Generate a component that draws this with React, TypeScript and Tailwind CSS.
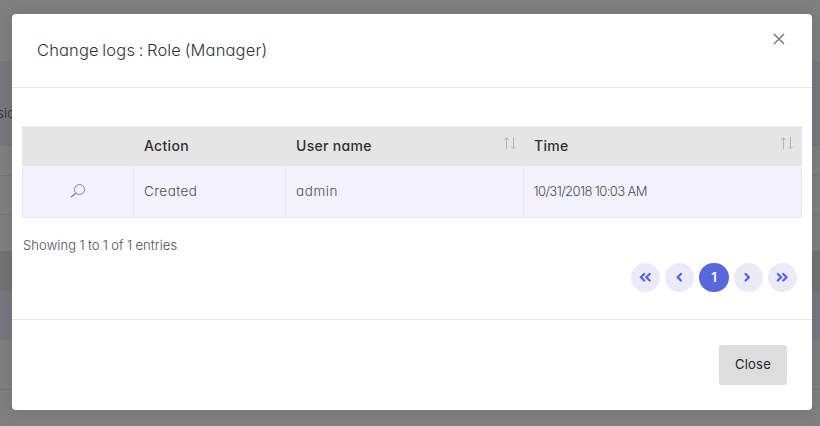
import React from "react";
import {
  FaAngleDoubleLeft,
  FaAngleDoubleRight,
  FaAngleLeft,
  FaAngleRight,
} from "react-icons/fa";

function Backdrop() {
  return (
    <div className="absolute inset-0 flex flex-col bg-[#808080]" aria-hidden="true">
      <div className="h-[61px]" />
      <div className="flex h-[85px] items-start bg-[#77787c] pt-[42px]">
        <span className="ml-[-3px] text-[13px] leading-[20px] font-light tracking-[0.3px] text-[#26272b]">sio</span>
      </div>
      <div className="h-[30px] border-b border-[#757575]" />
      <div className="h-[39px] border-b border-[#757575]" />
      <div className="h-[36px]" />
      <div className="h-[40px] bg-[#727272]" />
      <div className="h-[49px] bg-[#78777f]" />
      <div className="h-[50px] border-b border-[#757575]" />
    </div>
  );
}

function CloseIcon() {
  return (
    <svg className="size-[12px]" viewBox="0 0 12 12" fill="none" stroke="#7b7b7b" strokeWidth="1.5">
      <path d="M1 1 L11 11 M11 1 L1 11" />
    </svg>
  );
}

function SearchIcon() {
  return (
    <svg className="mr-px mb-[2px] h-[14px] w-[15px]" viewBox="0 0 15 14" fill="none" stroke="#83828a" strokeWidth="1">
      <circle cx="9.5" cy="5.5" r="5" />
      <path d="M5.8 9.2 L1 13" strokeWidth="1.4" />
    </svg>
  );
}

function SortIcon() {
  return (
    <svg className="h-[13px] w-[14px]" viewBox="0 0 14 13" fill="none" stroke="#b3b3b3" strokeWidth="1">
      <path d="M3.5 12.2 V0.8 M1 3.2 L3.5 0.7 L6 3.2" />
      <path d="M10.5 0.2 V11.8 M8 9.4 L10.5 11.9 L13 9.4" />
    </svg>
  );
}

function HeaderCell({ label, sortable }: { label: string; sortable?: boolean }) {
  return (
    <div className="flex items-start justify-between pt-[10px] pr-[7px] pl-[10px]">
      <span className="-mt-px text-[14px] leading-[20px] font-medium tracking-[0.3px] text-[#2f3034]">{label}</span>
      {sortable && <SortIcon />}
    </div>
  );
}

function PageButton({ active, children }: { active?: boolean; children: React.ReactNode }) {
  return (
    <button
      className={
        active
          ? "flex size-[29.25px] items-center justify-center rounded-full bg-[#5867dd] text-[13px] font-semibold text-white"
          : "flex size-[29.25px] items-center justify-center rounded-full bg-[#edeaf8] pr-px pb-px text-[14.5px] text-[#5867dd]"
      }
    >
      {children}
    </button>
  );
}

const columns = "grid grid-cols-[111px_152px_238px_1fr]";

export default function App() {
  return (
    <div className="relative h-[426px] w-[820px] overflow-hidden font-['Inter',sans-serif] [font-feature-settings:'cv11']">
      <Backdrop />
      <div className="relative mt-[14px] ml-[12px] flex h-[396px] w-[800px] flex-col rounded-[4px] bg-white shadow-[0_0_15px_1px_rgba(69,65,78,0.2)]">
        <header className="flex h-[74px] items-start justify-between border-b border-[#e9e9ec] pr-[27px] pl-[25px]">
          <h5 className="pt-[24px] text-[16.5px] leading-[24px] font-light tracking-[0.15px] text-[#33343b] [word-spacing:-1.2px]">
            Change logs : Role (Manager)
          </h5>
          <button className="pt-[19px]" aria-label="Dismiss">
            <CloseIcon />
          </button>
        </header>

        <main className="flex h-[231px] flex-col px-[10px] pt-[38px] text-[13px] font-light text-[#4d4e56]">
          <div className="h-[92px] border border-[#ebe9f7]">
            <div className={`${columns} h-[39px] bg-[#e5e5e5]`}>
              <div />
              <HeaderCell label="Action" />
              <HeaderCell label="User name" sortable />
              <HeaderCell label="Time" sortable />
            </div>
            <div className={`${columns} h-[51px] bg-[#f3f1fc]`}>
              <div className="flex items-center justify-center border-r border-[#e8e8ef]">
                <SearchIcon />
              </div>
              <div className="flex items-center border-r border-[#e8e8ef] pl-[10px] text-[13.5px] tracking-[0.45px]">Created</div>
              <div className="flex items-center border-r border-[#e8e8ef] pl-[10px] text-[13.5px] tracking-[0.6px]">admin</div>
              <div className="flex items-center pl-[9.5px] tracking-[-0.6px]">10/31/2018 10:03 AM</div>
            </div>
          </div>
          <div className="pt-[17px] pl-px leading-[20px] tracking-[0.1px] [word-spacing:-0.5px]">Showing 1 to 1 of 1 entries</div>
          <nav className="mt-[8px] mr-[5px] flex justify-end gap-[5px]">
            <PageButton><FaAngleDoubleLeft /></PageButton>
            <PageButton><FaAngleLeft /></PageButton>
            <PageButton active>1</PageButton>
            <PageButton><FaAngleRight /></PageButton>
            <PageButton><FaAngleDoubleRight /></PageButton>
          </nav>
        </main>

        <footer className="flex flex-1 items-start justify-end border-t border-[#e9e9ec] pt-[25px] pr-[25px]">
          <button className="h-[40px] w-[68px] rounded-[3px] bg-[#dddddd] text-[13px] tracking-[0.2px] text-[#212529]">
            Close
          </button>
        </footer>
      </div>
    </div>
  );
}
